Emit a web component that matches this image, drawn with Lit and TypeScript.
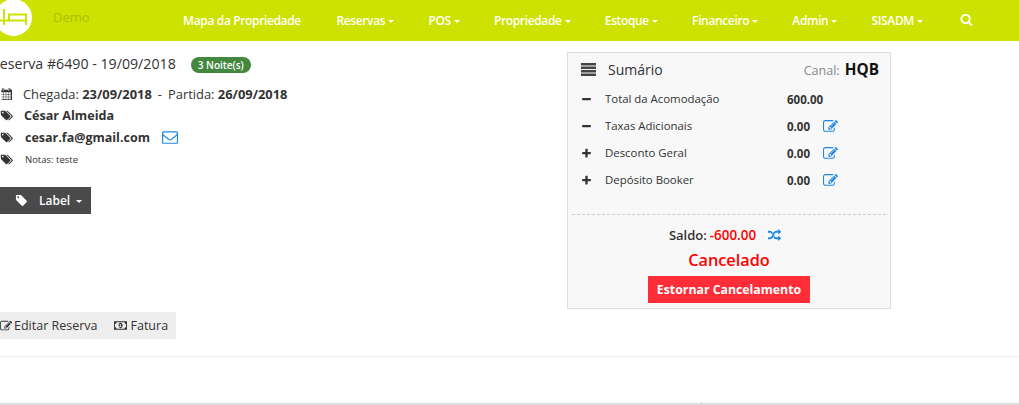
import { LitElement, html, css, svg } from "lit";
import { customElement } from "lit/decorators.js";

const P = {
  search: "M1216 832q0-185-131.500-316.500t-316.500-131.500-316.500 131.500-131.500 316.500 131.500 316.500 316.500 131.500 316.500-131.500 131.500-316.500zm512 832q0 52-38 90t-90 38q-54 0-90-38l-343-342q-179 124-399 124-143 0-273.500-55.500t-225-150-150-225-55.500-273.500 55.500-273.500 150-225 225-150 273.500-55.500 273.500 55.500 225 150 150 225 55.500 273.500q0 220-124 399l343 343q37 37 37 90z",
  tag: "M576 448q0-53-37.500-90.500t-90.500-37.500-90.500 37.500-37.500 90.500 37.500 90.500 90.500 37.500 90.500-37.500 37.500-90.500zm1067 576q0 53-37 90l-491 492q-39 37-91 37-53 0-90-37l-715-716q-38-37-64.500-101t-26.500-117v-416q0-52 38-90t90-38h416q53 0 117 26.500t102 64.500l715 714q37 39 37 91z",
  tags: "M576 448q0-53-37.500-90.500t-90.500-37.500-90.500 37.500-37.500 90.500 37.500 90.500 90.500 37.500 90.500-37.500 37.500-90.500zm1067 576q0 53-37 90l-491 492q-39 37-91 37-53 0-90-37l-715-716q-38-37-64.500-101t-26.500-117v-416q0-52 38-90t90-38h416q53 0 117 26.500t102 64.500l715 714q37 39 37 91zm384 0q0 53-37 90l-491 492q-39 37-91 37-36 0-59-14t-53-45l470-470q37-37 37-90 0-52-37-91l-715-714q-38-38-102-64.500t-117-26.500h224q53 0 117 26.500t102 64.500l715 714q37 39 37 91z",
  minus: "M1600 736v192q0 40-28 68t-68 28h-1216q-40 0-68-28t-28-68v-192q0-40 28-68t68-28h1216q40 0 68 28t28 68z",
  plus: "M1600 736v192q0 40-28 68t-68 28h-416v416q0 40-28 68t-68 28h-192q-40 0-68-28t-28-68v-416h-416q-40 0-68-28t-28-68v-192q0-40 28-68t68-28h416v-416q0-40 28-68t68-28h192q40 0 68 28t28 68v416h416q40 0 68 28t28 68z",
  envelope: "M1664 1504v-768q-32 36-69 66-268 206-426 338-51 43-83 67t-86.500 48.500-102.500 24.500h-2q-48 0-102.500-24.500t-86.500-48.500-83-67q-158-132-426-338-37-30-69-66v768q0 13 9.500 22.500t22.500 9.500h1472q13 0 22.500-9.500t9.500-22.500zm0-1051v-24.500l-.5-13-3-12.500-5.500-9-9-7.500-14-2.500h-1472q-13 0-22.500 9.500t-9.500 22.500q0 168 147 284 193 152 401 317 6 5 35 29.500t46 37.500 44.500 31.500 50.500 27.500 43 9h2q20 0 43-9t50.500-27.500 44.500-31.500 46-37.500 35-29.500q208-165 401-317 54-43 100.500-115.500t46.500-131.500zm128-37v1088q0 66-47 113t-113 47h-1472q-66 0-113-47t-47-113v-1088q0-66 47-113t113-47h1472q66 0 113 47t47 113z",
  edit: "M888 1184l116-116-152-152-116 116v56h96v96h56zm440-720q-16-16-33 1l-350 350q-17 17-1 33t33-1l350-350q17-17 1-33zm80 594v190q0 119-84.500 203.500t-203.500 84.500h-832q-119 0-203.500-84.500t-84.500-203.500v-832q0-119 84.500-203.500t203.500-84.500h832q63 0 117 25 15 7 18 23 3 17-9 29l-49 49q-14 14-32 8-23-6-45-6h-832q-66 0-113 47t-47 113v832q0 66 47 113t113 47h832q66 0 113-47t47-113v-126q0-13 9-22l64-64q15-15 35-7t20 29zm-96-738l288 288-672 672h-288v-288zm444 132l-92 92-288-288 92-92q28-28 68-28t68 28l152 152q28 28 28 68t-28 68z",
  random: "M666 481q-60 92-137 273-22-45-37-72.500t-40.500-63.500-51-56.500-63-35-81.500-14.500h-224q-14 0-23-9t-9-23v-192q0-14 9-23t23-9h224q250 0 410 225zm1126 799q0 14-9 23l-320 320q-9 9-23 9-13 0-22.500-9.500t-9.500-22.500v-192q-32 0-85 .5t-81 1-73-1-71-5-64-10.500-63-18.500-58-28.500-59-40-55-53.500-56-69.500q59-93 136-273 22 45 37 72.500t40.500 63.500 51 56.500 63 35 81.500 14.500h256v-192q0-14 9-23t23-9q12 0 24 10l319 319q9 9 9 23zm0-896q0 14-9 23l-320 320q-9 9-23 9-13 0-22.500-9.500t-9.500-22.500v-192h-256q-48 0-87 15t-69 45-51 61.500-45 77.500q-32 62-78 171-29 66-49.500 111t-54 105-64 100-74 83-90 68.500-106.500 42-128 16.500h-224q-14 0-23-9t-9-23v-192q0-14 9-23t23-9h224q48 0 87-15t69-45 51-61.500 45-77.500q32-62 78-171 29-66 49.500-111t54-105 64-100 74-83 90-68.500 106.500-42 128-16.500h256v-192q0-14 9-23t23-9q12 0 24 10l319 319q9 9 9 23z",
  calendar: "M192 1664h288v-288h-288zm352 0h320v-288h-320zm-352-352h288v-320h-288zm352 0h320v-320h-320zm-352-384h288v-288h-288zm736 736h320v-288h-320zm-384-736h320v-288h-320zm768 736h288v-288h-288zm-384-352h320v-320h-320zm384 0h288v-320h-288zm-384-384h320v-288h-320zm384 0h288v-288h-288zM512 128h-96v320h96zM1376 128h-96v320h96zM128 256h160v-64q0-66 47-113t113-47h32q66 0 113 47t47 113v64h576v-64q0-66 47-113t113-47h32q66 0 113 47t47 113v64h160q52 0 90 38t38 90v1280q0 52-38 90t-90 38h-1408q-52 0-90-38t-38-90v-1280q0-52 38-90t90-38z",
  money: "M0 320h1792v1152h-1792zM128 448v896h1536v-896zM896 520q-150 0-230 130t-30 246q0 116 80 246t180 130q120 0 210-130t90-246q0-116-90-246t-210-130zM820 680h110v320h90v90h-300v-90h100v-220h-80v-60zM128 1120q110 0 160 50t60 174h-220zM1664 672q-110 0-160-50t-60-174h220zM1664 1120v224h-220q10-124 60-174t160-50zM128 672v-224h220q-10 124-60 174t-160 50z",
};

const icon = (d: string, size: number, vb = "0 0 1792 1792") => html`
  <svg class="ic" width=${size} height=${size} viewBox=${vb} fill="currentColor" fill-rule="evenodd" aria-hidden="true">${svg`<path d=${d}></path>`}</svg>`;

const NAV: [string, boolean][] = [
  ["Mapa da Propriedade", false],
  ["Reservas", true],
  ["POS", true],
  ["Propriedade", true],
  ["Estoque", true],
  ["Financeiro", true],
  ["Admin", true],
  ["SISADM", true],
];

const ROWS: [string, string, string, boolean][] = [
  [P.minus, "Total da Acomodação", "600.00", false],
  [P.minus, "Taxas Adicionais", "0.00", true],
  [P.plus, "Desconto Geral", "0.00", true],
  [P.plus, "Depósito Booker", "0.00", true],
];

@customElement("app-root")
export class AppRoot extends LitElement {
  static styles = css`
    :host {
      display: block;
      width: 1019px;
      height: 405px;
      overflow: hidden;
      background: #fff;
      font-family: "Open Sans", "Liberation Sans", sans-serif;
      color: #333;
      font-size: 13px;
    }
    .ic { display: block; flex: none; }
    nav {
      height: 41px;
      background: #cde200;
      display: flex;
      align-items: center;
      overflow: hidden;
    }
    .logo { display: block; flex: none; align-self: flex-start; margin: -1px 0 0 -5px; }
    .brand {
      width: 130px;
      margin-left: 21px;
      margin-top: -8px;
      font-size: 13px;
      color: #a9bf00;
      flex: none;
    }
    .menu { display: flex; align-items: center; gap: 34.2px; color: #fff; font-size: 12px; font-weight: 600; letter-spacing: -0.36px; }
    .item { display: flex; align-items: center; }
    .item:first-child { margin-right: 1.3px; }
    .caret {
      width: 0; height: 0; margin-left: 3px; margin-top: 1px;
      border-top: 3px solid currentColor;
      border-left: 3px solid transparent;
      border-right: 3px solid transparent;
    }
    .search { color: #fff; margin-left: 37px; margin-top: -2px; }
    main { display: flex; height: 315px; border-bottom: 1px solid #eee; }
    .left { width: 567px; flex: none; display: flex; flex-direction: column; overflow: hidden; }
    .shift { display: flex; flex-direction: column; }
    h1 {
      margin: 13px 0 0 -9px;
      font-size: 14.2px;
      font-weight: 400;
      line-height: 20px;
      display: flex;
      align-items: center;
      color: #333;
    }
    .badge {
      margin-left: 15px;
      margin-top: 1px;
      background: #43883f;
      color: #fff;
      font-size: 10px;
      font-weight: 600;
      line-height: 16px;
      height: 16px;
      border-radius: 8px;
      padding: 0 7px;
    }
    .info { display: flex; align-items: center; color: #333; }
    .dates { margin-top: 10px; height: 20px; font-size: 12.9px; }
    .dates .lab { margin-left: 11px; }
    .sep { margin: 0 6px; }
    .name { margin-top: 1px; height: 21px; font-size: 12.6px; font-weight: 700; }
    .name .t { margin-left: 11px; }
    .mail { height: 22px; font-size: 12.5px; font-weight: 700; }
    .mail .t { margin-left: 12px; }
    .env { color: #1e88e5; margin-left: 12px; }
    .notes { height: 22px; font-size: 9.5px; }
    .notes .t { margin-left: 12px; }
    .btn {
      margin: 17px 0 0 -9px;
      width: 100px;
      height: 27px;
      box-sizing: border-box;
      background: #4a4a4a;
      color: #fff;
      display: flex;
      align-items: center;
      padding-left: 24px;
      font-size: 12px;
      font-weight: 600;
    }
    .btn .t { margin-left: 11px; }
    .btn .caret { margin-left: 6px; }
    .tools {
      margin: 98px 0 0 -9px;
      width: 185px;
      height: 27px;
      background: #eee;
      display: flex;
      align-items: center;
      padding-left: 9px;
      box-sizing: border-box;
      color: #333;
      font-size: 12.5px;
    }
    .tools .ic { margin-right: 2px; }
    .fat { margin-left: 16px; display: flex; align-items: center; }
    .fat .ic { margin-right: 4px; }
    .panel {
      margin-top: 11px;
      width: 324px;
      height: 257px;
      box-sizing: border-box;
      border: 1px solid #ddd;
      background: #f8f8f8;
      display: flex;
      flex-direction: column;
    }
    .head { display: flex; align-items: center; height: 30px; padding: 0 11px 0 13px; margin-top: 1px; }
    .head .title { margin-left: 12px; font-size: 14px; color: #333; flex: 1; }
    .canal { color: #8a8a8a; font-size: 12.5px; }
    .canal b { color: #111; font-size: 15.3px; margin-left: 2px; }
    .rows { padding-top: 2px; }
    .row { display: grid; grid-template-columns: 24px 182px 36px 1fr; align-items: center; height: 27px; padding-left: 13px; }
    .row .lab { font-size: 11.4px; color: #333; margin-top: -2px; }
    .row .val { font-size: 11.5px; font-weight: 700; color: #333; }
    .row .e { color: #1e88e5; margin-top: -1px; }
    .dash { margin: 20px 4px 0; border-top: 1px dashed #ccc; }
    .foot { display: flex; flex-direction: column; align-items: center; }
    .saldo { margin-top: 11px; height: 18px; padding-right: 8px; display: flex; align-items: center; font-size: 13px; font-weight: 600; color: #333; }
    .saldo .neg { color: #f00; margin-left: 3px; font-size: 13.4px; }
    .saldo .ic { color: #1e88e5; margin-left: 12px; }
    .cancel { margin-top: 4px; font-size: 16.3px; font-weight: 600; color: #f00; line-height: 24px; }
    .rev { margin-top: 4px; background: #ff2d37; color: #fff; font-size: 12.3px; font-weight: 700; height: 27px; line-height: 27px; width: 162px; text-align: center; }
    .spacer { height: 46px; border-bottom: 2px solid #ddd; position: relative; }
    .tick { position: absolute; left: 701px; bottom: -1px; width: 1px; height: 2px; background: #ccc; }
  `;

  render() {
    return html`
      <nav>
        <svg class="logo" width="37" height="37" viewBox="-5 -1 37 37" aria-hidden="true">
          <circle cx="13.500" cy="17.500" r="18.500" fill="#fff"></circle>
          <path d="M4 9V25M0 20.500H26.500M26 14V25M9 20V14.500H26.500" fill="none" stroke="#cde200" stroke-width="2"></path>
        </svg>
        <div class="brand">Demo</div>
        <div class="menu">
          ${NAV.map(([t, c]) => html`<div class="item">${t}${c ? html`<span class="caret"></span>` : ""}</div>`)}
        </div>
        <div class="search">${icon(P.search, 13)}</div>
      </nav>
      <main>
        <div class="left">
          <div class="shift">
            <h1>Reserva #6490 - 19/09/2018<span class="badge">3 Noite(s)</span></h1>
            <div class="info dates">
              ${icon(P.calendar, 12)}
              <span class="lab">Chegada: <b>23/09/2018</b></span><span class="sep">-</span><span>Partida: <b>26/09/2018</b></span>
            </div>
            <div class="info name">${icon(P.tags, 13, "0 0 2048 1792")}<span class="t">César Almeida</span></div>
            <div class="info mail">${icon(P.tags, 13, "0 0 2048 1792")}<span class="t">cesar.fa@gmail.com</span><span class="env">${icon(P.envelope, 16)}</span></div>
            <div class="info notes">${icon(P.tags, 13, "0 0 2048 1792")}<span class="t">Notas: teste</span></div>
            <div class="btn">${icon(P.tag, 13)}<span class="t">Label</span><span class="caret"></span></div>
            <div class="tools">
              ${icon(P.edit, 12)}<span>Editar Reserva</span>
              <span class="fat">${icon(P.money, 13)}<span>Fatura</span></span>
            </div>
          </div>
        </div>
        <section class="panel">
          <div class="head">
            <svg class="ic" width="15" height="13" viewBox="0 0 15 13" fill="#444" aria-hidden="true">
              <path d="M0 0h15v2.500H0zM0 3.500h15v2.500H0zM0 7h15v2.500H0zM0 10.500h15V13H0z"></path>
            </svg>
            <span class="title">Sumário</span>
            <span class="canal">Canal: <b>HQB</b></span>
          </div>
          <div class="rows">
            ${ROWS.map(([d, l, v, e]) => html`
              <div class="row">
                ${icon(d, 11)}
                <span class="lab">${l}</span>
                <span class="val">${v}</span>
                ${e ? html`<span class="e">${icon(P.edit, 15)}</span>` : html`<span></span>`}
              </div>`)}
          </div>
          <div class="dash"></div>
          <div class="foot">
            <div class="saldo">Saldo: <span class="neg">-600.00</span>${icon(P.random, 13)}</div>
            <div class="cancel">Cancelado</div>
            <div class="rev">Estornar Cancelamento</div>
          </div>
        </section>
      </main>
      <div class="spacer"><span class="tick"></span></div>
    `;
  }
}
